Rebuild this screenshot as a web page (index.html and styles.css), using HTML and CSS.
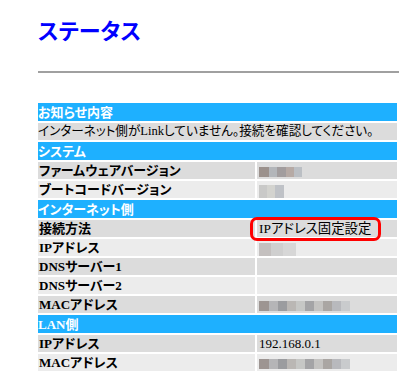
FILE: index.html
```html
<!DOCTYPE html>
<html lang="ja">
<head>
  <meta charset="UTF-8">
  <title>ステータス</title>
  <link rel="stylesheet" href="styles.css">
</head>
<body>
  <div class="page">
    <h1 class="title">ステータス</h1>
    <hr class="rule">

    <table class="status">
      <tr class="head"><td colspan="2">お知らせ内容</td></tr>
      <tr class="dark"><td colspan="2" class="notice">インターネット側がLinkしていません。接続を確認してください。</td></tr>

      <tr class="head"><td colspan="2">システム</td></tr>
      <tr class="dark"><th>ファームウェアバージョン</th><td><span class="mask mask-fw"></span></td></tr>
      <tr class="light"><th>ブートコードバージョン</th><td><span class="mask mask-boot"></span></td></tr>

      <tr class="head"><td colspan="2">インターネット側</td></tr>
      <tr class="dark"><th>接続方法</th><td><span class="marked">IPアドレス固定設定</span></td></tr>
      <tr class="light"><th>IPアドレス</th><td><span class="mask mask-ip"></span></td></tr>
      <tr class="dark"><th>DNSサーバー1</th><td></td></tr>
      <tr class="light"><th>DNSサーバー2</th><td></td></tr>
      <tr class="dark"><th>MACアドレス</th><td><span class="mask mask-mac"></span></td></tr>

      <tr class="head"><td colspan="2">LAN側</td></tr>
      <tr class="dark"><th>IPアドレス</th><td>192.168.0.1</td></tr>
      <tr class="light"><th>MACアドレス</th><td><span class="mask mask-mac"></span></td></tr>
    </table>
  </div>
</body>
</html>
```

FILE: styles.css
```css
html, body {
  margin: 0;
  overflow: hidden;
  background: #ffffff;
}
body {
  font-family: "Liberation Serif", "Noto Sans CJK JP", serif;
  font-feature-settings: "palt";
  color: #000000;
}
.page {
  padding-left: 38px;
}
.title {
  margin: 0;
  padding-top: 13px;
  height: 32px;
  line-height: 32px;
  font-family: "Noto Sans CJK JP", sans-serif;
  font-size: 22px;
  font-weight: bold;
  color: #0000ff;
}
.rule {
  margin: 26px 0 0 0;
  border: none;
  border-top: 2px solid #a0a0a0;
}
.status {
  margin: 28px 0 0 -2px;
  width: 363px;
  border-spacing: 2px;
  font-size: 13px;
}
.status td, .status th {
  height: 17px;
  padding: 0 1px;
  line-height: 17px;
  text-align: left;
  white-space: nowrap;
}
.status th {
  width: 215px;
  font-weight: bold;
}
.status td {
  padding-left: 2px;
}
.head td {
  height: 18px;
  padding-left: 0;
  background: #1eb0ff;
  color: #ffffff;
  font-weight: bold;
}
.dark th, .dark td {
  background: #dcdcdc;
}
.light th, .light td {
  background: #ececec;
}
.status .notice {
  padding-left: 0;
  font-size: 12.6px;
}
.marked {
  position: relative;
  font-size: 13.4px;
}
.marked::after {
  content: "";
  position: absolute;
  left: -9px;
  right: -10px;
  top: -4px;
  bottom: -5px;
  border: 3px solid #ff0000;
  border-radius: 7px;
}
.mask {
  display: inline-block;
  height: 10px;
  vertical-align: middle;
}
.mask-fw {
  width: 43px;
  background: linear-gradient(90deg, #9b918c 0 10px, #b3b6ba 10px 18px, #a29d9e 18px 27px, #b6aaa5 27px 35px, #bbbfc4 35px);
}
.mask-boot {
  width: 25px;
  height: 13px;
  background: linear-gradient(90deg, #c9c9c8 0 8px, #d3d3cf 8px 16px, #bfc2c7 16px);
}
.mask-ip {
  width: 37px;
  height: 13px;
  background: linear-gradient(90deg, #c4c0bf 0 12px, #cfcfcf 12px 24px, #d7d7d7 24px);
}
.mask-mac {
  width: 91px;
  background: linear-gradient(90deg, #9d9592 0 10px, #b5b5b7 10px 19px, #9b9c9f 19px 28px, #bab7b4 28px 37px, #c6c7c5 37px 46px, #a4a4a6 46px 55px, #c4c3c1 55px 64px, #aaa6a3 64px 73px, #b8b9bd 73px 82px, #c9cbcd 82px);
}
```
